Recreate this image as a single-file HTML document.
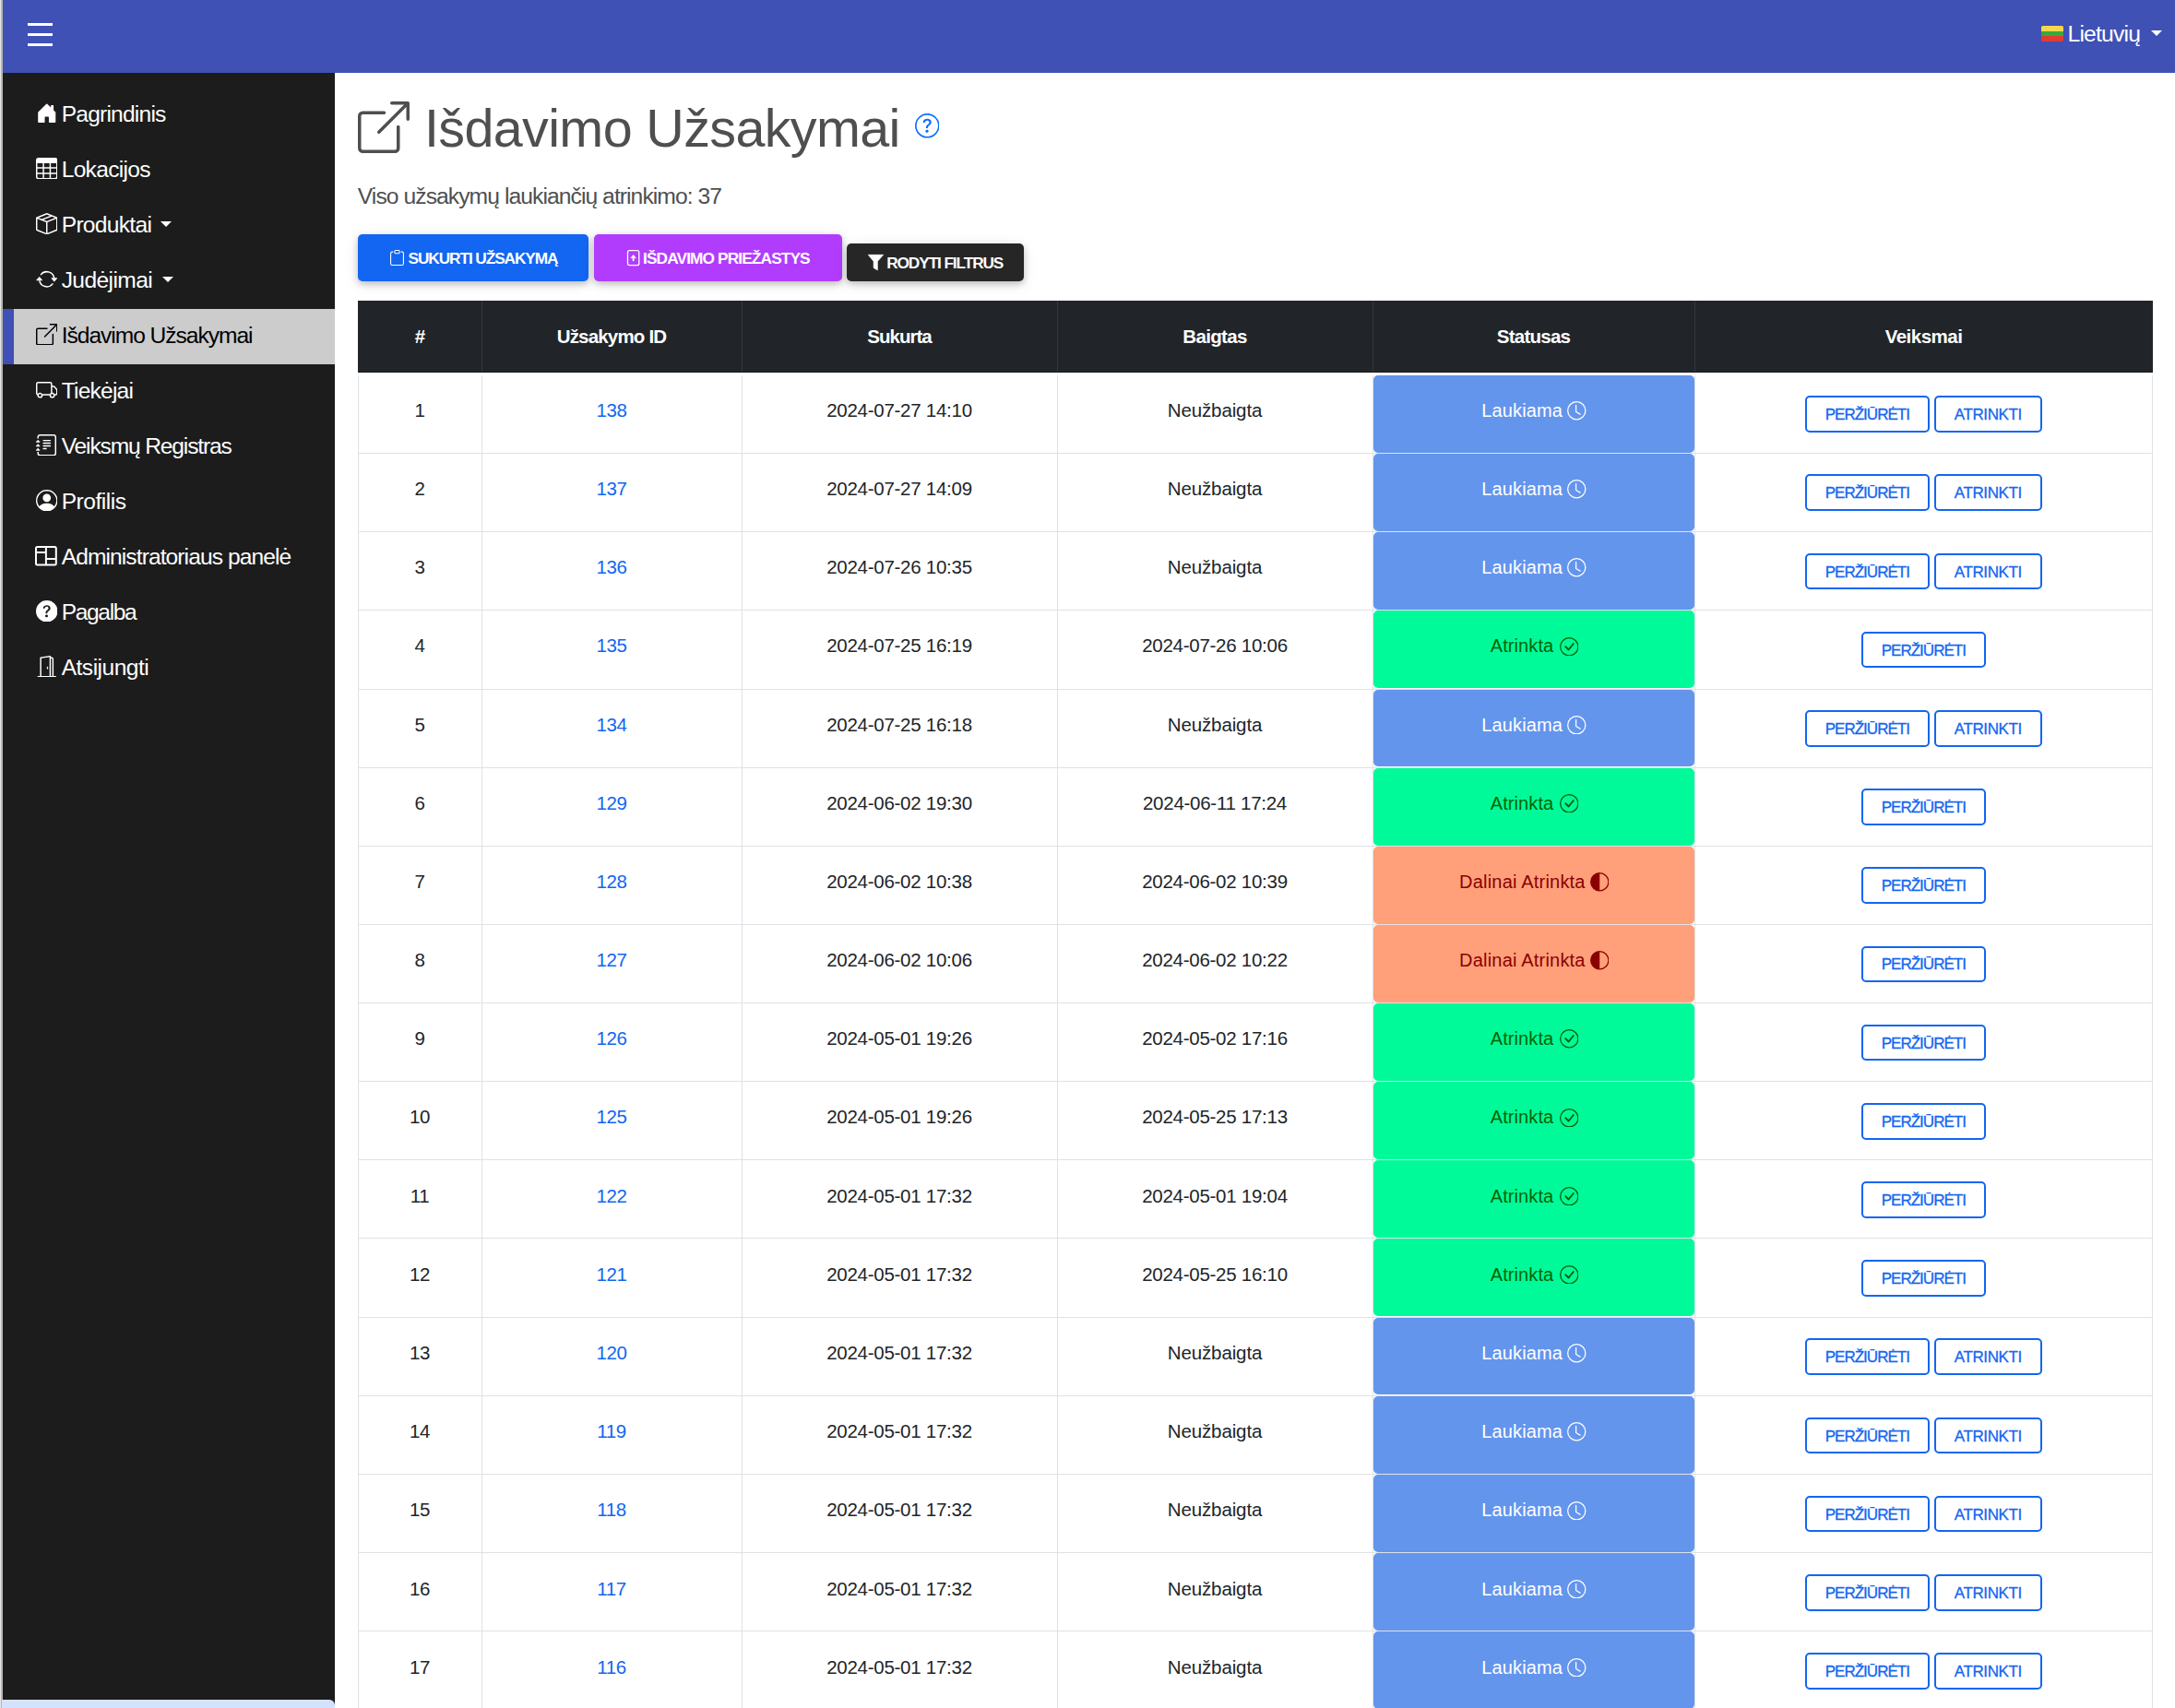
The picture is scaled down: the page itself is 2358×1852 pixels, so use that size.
<!DOCTYPE html>
<html><head><meta charset="utf-8"><title>Išdavimo Užsakymai</title>
<style>
html,body{margin:0;padding:0;width:2358px;height:1852px;overflow:hidden;background:#fff;}
body{font-family:"Liberation Sans",sans-serif;position:relative;}
.a{position:absolute;white-space:nowrap;}
.t{position:absolute;white-space:nowrap;line-height:1;}
</style></head><body>

<div class="a" style="left:0;top:0;width:1.3px;height:1852px;background:#e6e6e6"></div>
<div class="a" style="left:1.3px;top:0;width:1.7px;height:1852px;background:#b7b7b0"></div>
<div class="a" style="left:3px;top:0;width:2355px;height:79px;background:#3f51b5"></div>
<div class="a" style="left:30px;top:24.5px;width:26.5px;height:3.5px;background:#fff"></div>
<div class="a" style="left:30px;top:35.5px;width:26.5px;height:3.5px;background:#fff"></div>
<div class="a" style="left:30px;top:46.5px;width:26.5px;height:3.5px;background:#fff"></div>
<div class="a" style="left:2213px;top:28px;width:24px;height:17px;overflow:hidden;border-radius:1.5px;box-shadow:inset 0 0 0 1px rgba(0,0,0,.12)"><div style="height:6px;background:#f6d64e"></div><div style="height:5px;background:#3aa83a"></div><div style="height:6px;background:#e23a36"></div></div>
<div class="t" style="left:2241.5px;top:25.09px;font-size:24.7px;color:#fff;letter-spacing:-0.81px">Lietuvių</div>
<div class="a" style="left:2332px;top:33px;width:0;height:0;border-left:6px solid transparent;border-right:6px solid transparent;border-top:6.5px solid #fff"></div>
<div class="a" style="left:3px;top:79px;width:360px;height:1773px;background:#1c1c1c"></div>
<div class="a" style="left:3px;top:335px;width:360px;height:60px;background:#cccccc"></div>
<div class="a" style="left:3px;top:335px;width:12px;height:60px;background:#3f51b5"></div>
<div class="a" style="left:2px;top:1842.5px;width:361px;height:20px;background:#d3e3fd;border-top-right-radius:6px"></div>
<svg style="position:absolute;left:38.8px;top:110.80000000000001px" width="23.5" height="23.5" viewBox="0 0 16 16" fill="#fff"><path d="M6.5 14.5v-3.505c0-.245.25-.495.5-.495h2c.25 0 .5.25.5.5v3.5a.5.5 0 0 0 .5.5h4a.5.5 0 0 0 .5-.5v-7a.5.5 0 0 0-.146-.354L13 5.793V2.5a.5.5 0 0 0-.5-.5h-1a.5.5 0 0 0-.5.5v1.293L8.354 1.146a.5.5 0 0 0-.708 0l-6 6A.5.5 0 0 0 1.5 7.5v7a.5.5 0 0 0 .5.5h4a.5.5 0 0 0 .5-.5"/></svg>
<div class="t" style="left:66.7px;top:111.97px;font-size:24.6px;color:#fff;letter-spacing:-0.8px">Pagrindinis</div>
<svg style="position:absolute;left:38.8px;top:170.8px" width="23.5" height="23.5" viewBox="0 0 16 16" fill="#fff"><path d="M0 2a2 2 0 0 1 2-2h12a2 2 0 0 1 2 2v12a2 2 0 0 1-2 2H2a2 2 0 0 1-2-2zm15 2h-4v3h4zm0 4h-4v3h4zm0 4h-4v3h3a1 1 0 0 0 1-1zm-5 3v-3H6v3zm-5 0v-3H1v2a1 1 0 0 0 1 1zm-4-4h4V8H1zm0-4h4V4H1zm5-3v3h4V4zm4 4H6v3h4z"/></svg>
<div class="t" style="left:66.7px;top:171.97px;font-size:24.6px;color:#fff;letter-spacing:-0.71px">Lokacijos</div>
<svg style="position:absolute;left:38.8px;top:230.8px" width="23.5" height="23.5" viewBox="0 0 16 16" fill="#fff"><path d="M8.186 1.113a.5.5 0 0 0-.372 0L1.846 3.5l2.404.961L10.404 2zm3.564 1.426L5.596 5 8 5.961 14.154 3.5zm3.25 1.7-6.5 2.6v7.922l6.5-2.6V4.24zM7.5 14.762V6.838L1 4.239v7.923zM7.443.184a1.5 1.5 0 0 1 1.114 0l7.129 2.852A.5.5 0 0 1 16 3.5v8.662a1 1 0 0 1-.629.928l-7.185 2.874a.5.5 0 0 1-.372 0L.63 13.09a1 1 0 0 1-.63-.928V3.5a.5.5 0 0 1 .314-.464z"/></svg>
<div class="t" style="left:66.7px;top:231.97px;font-size:24.6px;color:#fff;letter-spacing:-0.71px">Produktai</div>
<div class="a" style="left:174px;top:240.3px;width:0;height:0;border-left:6px solid transparent;border-right:6px solid transparent;border-top:6.5px solid #fff"></div>
<svg style="position:absolute;left:38.8px;top:290.8px" width="23.5" height="23.5" viewBox="0 0 16 16" fill="#fff"><path d="M11.534 7h3.932a.25.25 0 0 1 .192.41l-1.966 2.36a.25.25 0 0 1-.384 0l-1.966-2.36a.25.25 0 0 1 .192-.41m-11 2h3.932a.25.25 0 0 0 .192-.41L2.692 6.23a.25.25 0 0 0-.384 0L.342 8.59A.25.25 0 0 0 .534 9"/><path fill-rule="evenodd" d="M8 3c-1.552 0-2.94.707-3.857 1.818a.5.5 0 1 1-.771-.636A6.002 6.002 0 0 1 13.917 7H12.9A5 5 0 0 0 8 3M3.1 9a5.002 5.002 0 0 0 8.757 2.182.5.5 0 1 1 .771.636A6.002 6.002 0 0 1 2.083 9z"/></svg>
<div class="t" style="left:66.7px;top:291.97px;font-size:24.6px;color:#fff;letter-spacing:-0.61px">Judėjimai</div>
<div class="a" style="left:176px;top:300.3px;width:0;height:0;border-left:6px solid transparent;border-right:6px solid transparent;border-top:6.5px solid #fff"></div>
<svg style="position:absolute;left:38.8px;top:350.8px" width="23.5" height="23.5" viewBox="0 0 16 16" fill="#000"><path fill-rule="evenodd" d="M8.636 3.5a.5.5 0 0 0-.5-.5H1.5A1.5 1.5 0 0 0 0 4.5v10A1.5 1.5 0 0 0 1.5 16h10a1.5 1.5 0 0 0 1.5-1.5V7.864a.5.5 0 0 0-1 0V14.5a.5.5 0 0 1-.5.5h-10a.5.5 0 0 1-.5-.5v-10a.5.5 0 0 1 .5-.5h6.636a.5.5 0 0 0 .5-.5"/><path fill-rule="evenodd" d="M16 .5a.5.5 0 0 0-.5-.5h-5a.5.5 0 0 0 0 1h3.793L6.146 9.146a.5.5 0 1 0 .708.708L15 1.707V5.5a.5.5 0 0 0 1 0z"/></svg>
<div class="t" style="left:66.7px;top:351.97px;font-size:24.6px;color:#000;letter-spacing:-1.04px">Išdavimo Užsakymai</div>
<svg style="position:absolute;left:38.8px;top:410.8px" width="23.5" height="23.5" viewBox="0 0 16 16" fill="#fff"><path d="M0 3.5A1.5 1.5 0 0 1 1.5 2h9A1.5 1.5 0 0 1 12 3.5V5h1.02a1.5 1.5 0 0 1 1.17.563l1.481 1.85a1.5 1.5 0 0 1 .329.938V10.5a1.5 1.5 0 0 1-1.5 1.5H14a2 2 0 1 1-4 0H5a2 2 0 1 1-3.998-.085A1.5 1.5 0 0 1 0 10.5zm1.294 7.456A2 2 0 0 1 4.732 11h5.536a2 2 0 0 1 .732-.732V3.5a.5.5 0 0 0-.5-.5h-9a.5.5 0 0 0-.5.5v7a.5.5 0 0 0 .294.456M12 10a2 2 0 0 1 1.732 1h.768a.5.5 0 0 0 .5-.5V8.35a.5.5 0 0 0-.11-.312l-1.48-1.85A.5.5 0 0 0 13.02 6H12zm-9 1a1 1 0 1 0 0 2 1 1 0 0 0 0-2m9 0a1 1 0 1 0 0 2 1 1 0 0 0 0-2"/></svg>
<div class="t" style="left:66.7px;top:411.97px;font-size:24.6px;color:#fff;letter-spacing:-0.8px">Tiekėjai</div>
<svg style="position:absolute;left:38.8px;top:470.8px" width="23.5" height="23.5" viewBox="0 0 16 16" fill="#fff"><path fill-rule="evenodd" d="M5 10.5a.5.5 0 0 1 .5-.5h2a.5.5 0 0 1 0 1h-2a.5.5 0 0 1-.5-.5m0-2a.5.5 0 0 1 .5-.5h5a.5.5 0 0 1 0 1h-5a.5.5 0 0 1-.5-.5m0-2a.5.5 0 0 1 .5-.5h5a.5.5 0 0 1 0 1h-5a.5.5 0 0 1-.5-.5m0-2a.5.5 0 0 1 .5-.5h5a.5.5 0 0 1 0 1h-5a.5.5 0 0 1-.5-.5"/><path d="M3 0h10a2 2 0 0 1 2 2v12a2 2 0 0 1-2 2H3a2 2 0 0 1-2-2v-1h1v1a1 1 0 0 0 1 1h10a1 1 0 0 0 1-1V2a1 1 0 0 0-1-1H3a1 1 0 0 0-1 1v1H1V2a2 2 0 0 1 2-2"/><path d="M1 5v-.5a.5.5 0 0 1 1 0V5h.5a.5.5 0 0 1 0 1h-2a.5.5 0 0 1 0-1zm0 3v-.5a.5.5 0 0 1 1 0V8h.5a.5.5 0 0 1 0 1h-2a.5.5 0 0 1 0-1zm0 3v-.5a.5.5 0 0 1 1 0v.5h.5a.5.5 0 0 1 0 1h-2a.5.5 0 0 1 0-1z"/></svg>
<div class="t" style="left:66.7px;top:471.97px;font-size:24.6px;color:#fff;letter-spacing:-1.16px">Veiksmų Registras</div>
<svg style="position:absolute;left:38.8px;top:530.8px" width="23.5" height="23.5" viewBox="0 0 16 16" fill="#fff"><path d="M11 6a3 3 0 1 1-6 0 3 3 0 0 1 6 0"/><path fill-rule="evenodd" d="M0 8a8 8 0 1 1 16 0A8 8 0 0 1 0 8m8-7a7 7 0 0 0-5.468 11.37C3.242 11.226 4.805 10 8 10s4.757 1.225 5.468 2.37A7 7 0 0 0 8 1"/></svg>
<div class="t" style="left:66.7px;top:531.97px;font-size:24.6px;color:#fff;letter-spacing:-0.49px">Profilis</div>
<svg style="position:absolute;left:38px;top:591.5px" width="24" height="22" viewBox="0 0 24 22"><rect x="1" y="1" width="21.8" height="19.6" rx="1.5" fill="none" stroke="#fff" stroke-width="2"/><line x1="11.9" y1="1" x2="11.9" y2="20.6" stroke="#fff" stroke-width="2"/><line x1="1" y1="7" x2="11.9" y2="7" stroke="#fff" stroke-width="2"/><line x1="11.9" y1="14" x2="22.8" y2="14" stroke="#fff" stroke-width="2"/></svg>
<div class="t" style="left:66.7px;top:591.97px;font-size:24.6px;color:#fff;letter-spacing:-0.92px">Administratoriaus panelė</div>
<svg style="position:absolute;left:38.8px;top:650.8px" width="23.5" height="23.5" viewBox="0 0 16 16" fill="#fff"><path d="M16 8A8 8 0 1 1 0 8a8 8 0 0 1 16 0M5.496 6.033h.825c.138 0 .248-.113.266-.25.09-.656.54-1.134 1.342-1.134.686 0 1.314.343 1.314 1.168 0 .635-.374.927-.965 1.371-.673.489-1.206 1.06-1.168 1.987l.003.217a.25.25 0 0 0 .25.246h.811a.25.25 0 0 0 .25-.25v-.105c0-.718.273-.927 1.01-1.486.609-.463 1.244-.977 1.244-2.056 0-1.511-1.276-2.241-2.673-2.241-1.267 0-2.655.59-2.75 2.286a.237.237 0 0 0 .241.247m2.325 6.443c.61 0 1.029-.394 1.029-.927 0-.552-.42-.94-1.029-.94-.584 0-1.009.388-1.009.94 0 .533.425.927 1.01.927z"/></svg>
<div class="t" style="left:66.7px;top:651.97px;font-size:24.6px;color:#fff;letter-spacing:-1.37px">Pagalba</div>
<svg style="position:absolute;left:38.8px;top:710.8px" width="23.5" height="23.5" viewBox="0 0 16 16" fill="#fff"><path d="M8.5 10c-.276 0-.5-.448-.5-1s.224-1 .5-1 .5.448.5 1-.224 1-.5 1"/><path d="M10.828.122A.5.5 0 0 1 11 .5V1h.5A1.5 1.5 0 0 1 13 2.5V15h1.5a.5.5 0 0 1 0 1h-13a.5.5 0 0 1 0-1H3V1.5a.5.5 0 0 1 .43-.495l7-1a.5.5 0 0 1 .398.117M11.5 2H11v13h1V2.5a.5.5 0 0 0-.5-.5M4 1.934V15h6V1.077z"/></svg>
<div class="t" style="left:66.7px;top:711.97px;font-size:24.6px;color:#fff;letter-spacing:-0.53px">Atsijungti</div>
<svg style="position:absolute;left:388px;top:110px" width="56" height="56" viewBox="0 0 16 16" fill="#4f4f4f"><path fill-rule="evenodd" d="M8.636 3.5a.5.5 0 0 0-.5-.5H1.5A1.5 1.5 0 0 0 0 4.5v10A1.5 1.5 0 0 0 1.5 16h10a1.5 1.5 0 0 0 1.5-1.5V7.864a.5.5 0 0 0-1 0V14.5a.5.5 0 0 1-.5.5h-10a.5.5 0 0 1-.5-.5v-10a.5.5 0 0 1 .5-.5h6.636a.5.5 0 0 0 .5-.5"/><path fill-rule="evenodd" d="M16 .5a.5.5 0 0 0-.5-.5h-5a.5.5 0 0 0 0 1h3.793L6.146 9.146a.5.5 0 1 0 .708.708L15 1.707V5.5a.5.5 0 0 0 1 0z"/></svg>
<div class="t" style="left:460px;top:110.51px;font-size:57.5px;color:#4f4f4f;letter-spacing:-0.64px">Išdavimo Užsakymai</div>
<svg style="position:absolute;left:991.5px;top:123.2px" width="26.6" height="26.6" viewBox="0 0 16 16" fill="#0d6efd"><path d="M8 15A7 7 0 1 1 8 1a7 7 0 0 1 0 14m0 1A8 8 0 1 0 8 0a8 8 0 0 0 0 16"/><path d="M5.255 5.786a.237.237 0 0 0 .241.247h.825c.138 0 .248-.113.266-.25.09-.656.54-1.134 1.342-1.134.686 0 1.314.343 1.314 1.168 0 .635-.374.927-.965 1.371-.673.489-1.206 1.06-1.168 1.987l.003.217a.25.25 0 0 0 .25.246h.811a.25.25 0 0 0 .25-.25v-.105c0-.718.273-.927 1.01-1.486.609-.463 1.244-.977 1.244-2.056 0-1.511-1.276-2.241-2.673-2.241-1.267 0-2.655.59-2.75 2.286m1.557 5.763c0 .533.425.927 1.01.927.609 0 1.028-.394 1.028-.927 0-.552-.42-.94-1.029-.94-.584 0-1.009.388-1.009.94"/></svg>
<div class="t" style="left:387.8px;top:200.69px;font-size:24.7px;color:#4f4f4f;letter-spacing:-0.95px">Viso užsakymų laukiančių atrinkimo: 37</div>
<div class="a" style="left:388px;top:254px;width:250px;height:51px;background:#1266f1;border-radius:5px;box-shadow:0 3px 7px 0 rgba(0,0,0,.2),0 3px 15px 0 rgba(0,0,0,.1)"></div>
<div class="a" style="left:644px;top:254px;width:269px;height:51px;background:#b23cfd;border-radius:5px;box-shadow:0 3px 7px 0 rgba(0,0,0,.2),0 3px 15px 0 rgba(0,0,0,.1)"></div>
<div class="a" style="left:918px;top:264px;width:192px;height:41px;background:#262626;border-radius:5px;box-shadow:0 3px 7px 0 rgba(0,0,0,.2),0 3px 15px 0 rgba(0,0,0,.1)"></div>
<svg style="position:absolute;left:421.9px;top:270.9px" width="17" height="17" viewBox="0 0 16 16" fill="#fff"><path d="M4 1.5H3a2 2 0 0 0-2 2V14a2 2 0 0 0 2 2h10a2 2 0 0 0 2-2V3.5a2 2 0 0 0-2-2h-1v1h1a1 1 0 0 1 1 1V14a1 1 0 0 1-1 1H3a1 1 0 0 1-1-1V3.5a1 1 0 0 1 1-1h1z"/><path d="M9.5 1a.5.5 0 0 1 .5.5v1a.5.5 0 0 1-.5.5h-3a.5.5 0 0 1-.5-.5v-1a.5.5 0 0 1 .5-.5zm-3-1A1.5 1.5 0 0 0 5 1.5v1A1.5 1.5 0 0 0 6.5 4h3A1.5 1.5 0 0 0 11 2.5v-1A1.5 1.5 0 0 0 9.5 0z"/></svg>
<svg style="position:absolute;left:677.5px;top:270.8px" width="17" height="18" viewBox="0 0 17 18"><rect x="2.5" y="0.65" width="12.3" height="16" rx="2" fill="none" stroke="#fff" stroke-width="1.3"/><polygon points="5.7,8.8 11.5,8.8 8.6,5.2" fill="#fff" stroke="#fff" stroke-width="0.4" stroke-linejoin="round"/><rect x="7.75" y="8.3" width="1.75" height="3.8" fill="#fff"/></svg>
<svg style="position:absolute;left:936px;top:270px" width="30" height="30" viewBox="0 0 30 30"><polygon points="5.2,6.3 21.7,6.3 15.4,13.4 15.4,22.9 11.1,20.5 11.1,13.4" fill="#fff" stroke="#fff" stroke-width="0.6" stroke-linejoin="round"/></svg>
<div class="t" style="left:442.5px;top:272.35px;font-size:17.3px;font-weight:bold;color:#fff;letter-spacing:-1.1px">SUKURTI UŽSAKYMĄ</div>
<div class="t" style="left:697px;top:272.35px;font-size:17.3px;font-weight:bold;color:#fff;letter-spacing:-0.88px">IŠDAVIMO PRIEŽASTYS</div>
<div class="t" style="left:961.2px;top:276.95px;font-size:17.3px;font-weight:bold;color:#fff;letter-spacing:-1.12px">RODYTI FILTRUS</div>
<div class="a" style="left:388px;top:326px;width:1946px;height:78px;background:#212529"></div>
<div class="a" style="left:388px;top:403px;width:1946px;height:1px;background:#16181b"></div>
<div class="a" style="left:522px;top:326px;width:1px;height:77px;background:#32383e"></div>
<div class="a" style="left:804px;top:326px;width:1px;height:77px;background:#32383e"></div>
<div class="a" style="left:1146px;top:326px;width:1px;height:77px;background:#32383e"></div>
<div class="a" style="left:1488px;top:326px;width:1px;height:77px;background:#32383e"></div>
<div class="a" style="left:1837px;top:326px;width:1px;height:77px;background:#32383e"></div>
<div class="t" style="left:388px;width:134px;text-align:center;top:354.64px;font-size:20.5px;font-weight:bold;color:#fff;letter-spacing:-0.8px">#</div>
<div class="t" style="left:522px;width:282px;text-align:center;top:354.64px;font-size:20.5px;font-weight:bold;color:#fff;letter-spacing:-0.81px">Užsakymo ID</div>
<div class="t" style="left:804px;width:342px;text-align:center;top:354.64px;font-size:20.5px;font-weight:bold;color:#fff;letter-spacing:-1.0px">Sukurta</div>
<div class="t" style="left:1146px;width:342px;text-align:center;top:354.64px;font-size:20.5px;font-weight:bold;color:#fff;letter-spacing:-0.68px">Baigtas</div>
<div class="t" style="left:1488px;width:349px;text-align:center;top:354.64px;font-size:20.5px;font-weight:bold;color:#fff;letter-spacing:-0.74px">Statusas</div>
<div class="t" style="left:1837px;width:497px;text-align:center;top:354.64px;font-size:20.5px;font-weight:bold;color:#fff;letter-spacing:-0.51px">Veiksmai</div>
<div class="a" style="left:388px;top:407px;width:1px;height:1445px;background:#dee2e6"></div>
<div class="a" style="left:522px;top:407px;width:1px;height:1445px;background:#dee2e6"></div>
<div class="a" style="left:804px;top:407px;width:1px;height:1445px;background:#dee2e6"></div>
<div class="a" style="left:1146px;top:407px;width:1px;height:1445px;background:#dee2e6"></div>
<div class="a" style="left:1488px;top:407px;width:1px;height:1445px;background:#dee2e6"></div>
<div class="a" style="left:1837px;top:407px;width:1px;height:1445px;background:#dee2e6"></div>
<div class="a" style="left:2333px;top:407px;width:1px;height:1445px;background:#dee2e6"></div>
<div class="a" style="left:1489px;top:407.00px;width:348px;height:83.93px;background:#6495ed;border-radius:5px"></div>
<div class="a" style="left:388px;top:491.13px;width:1946px;height:1px;background:#dee2e6"></div>
<div class="t" style="left:388px;width:134px;text-align:center;top:434.84px;font-size:20.5px;color:#212529;letter-spacing:-0.35px">1</div>
<div class="t" style="left:522px;width:282px;text-align:center;top:434.84px;font-size:20.5px;color:#1266f1;letter-spacing:-0.35px">138</div>
<div class="t" style="left:804px;width:342px;text-align:center;top:434.84px;font-size:20.5px;color:#212529;letter-spacing:-0.27px">2024-07-27 14:10</div>
<div class="t" style="left:1146px;width:342px;text-align:center;top:434.84px;font-size:20.5px;color:#212529;letter-spacing:-0.12px">Neužbaigta</div>
<div class="t" style="left:1606.30px;top:434.87px;font-size:20px;color:#fff;letter-spacing:0.13px">Laukiama</div>
<svg style="position:absolute;left:1699.2px;top:435.0px" width="20.5" height="20.5" viewBox="0 0 16 16" fill="#fff"><path d="M8 3.5a.5.5 0 0 0-1 0V9a.5.5 0 0 0 .252.434l3.5 2a.5.5 0 0 0 .496-.868L8 8.71z"/><path d="M16 8A8 8 0 1 1 0 8a8 8 0 0 1 16 0M1 8a7 7 0 1 0 14 0A7 7 0 0 0 1 8"/></svg>
<div class="a" style="left:1957px;top:429.30px;width:134.7px;height:39.6px;box-sizing:border-box;border:2px solid #1266f1;border-radius:5px"></div>
<div class="a" style="left:2097px;top:429.30px;width:116.7px;height:39.6px;box-sizing:border-box;border:2px solid #1266f1;border-radius:5px"></div>
<div class="t" style="left:1957px;width:134.7px;text-align:center;top:441.21px;font-size:17px;color:#1266f1;-webkit-text-stroke:0.3px #1266f1;letter-spacing:-0.97px">PERŽIŪRĖTI</div>
<div class="t" style="left:2097px;width:116.7px;text-align:center;top:441.21px;font-size:17px;color:#1266f1;-webkit-text-stroke:0.3px #1266f1;letter-spacing:-0.39px">ATRINKTI</div>
<div class="a" style="left:1489px;top:492.13px;width:348px;height:83.93px;background:#6495ed;border-radius:5px"></div>
<div class="a" style="left:388px;top:576.26px;width:1946px;height:1px;background:#dee2e6"></div>
<div class="t" style="left:388px;width:134px;text-align:center;top:520.02px;font-size:20.5px;color:#212529;letter-spacing:-0.35px">2</div>
<div class="t" style="left:522px;width:282px;text-align:center;top:520.02px;font-size:20.5px;color:#1266f1;letter-spacing:-0.35px">137</div>
<div class="t" style="left:804px;width:342px;text-align:center;top:520.02px;font-size:20.5px;color:#212529;letter-spacing:-0.27px">2024-07-27 14:09</div>
<div class="t" style="left:1146px;width:342px;text-align:center;top:520.02px;font-size:20.5px;color:#212529;letter-spacing:-0.12px">Neužbaigta</div>
<div class="t" style="left:1606.30px;top:520.05px;font-size:20px;color:#fff;letter-spacing:0.13px">Laukiama</div>
<svg style="position:absolute;left:1699.2px;top:520.18px" width="20.5" height="20.5" viewBox="0 0 16 16" fill="#fff"><path d="M8 3.5a.5.5 0 0 0-1 0V9a.5.5 0 0 0 .252.434l3.5 2a.5.5 0 0 0 .496-.868L8 8.71z"/><path d="M16 8A8 8 0 1 1 0 8a8 8 0 0 1 16 0M1 8a7 7 0 1 0 14 0A7 7 0 0 0 1 8"/></svg>
<div class="a" style="left:1957px;top:514.48px;width:134.7px;height:39.6px;box-sizing:border-box;border:2px solid #1266f1;border-radius:5px"></div>
<div class="a" style="left:2097px;top:514.48px;width:116.7px;height:39.6px;box-sizing:border-box;border:2px solid #1266f1;border-radius:5px"></div>
<div class="t" style="left:1957px;width:134.7px;text-align:center;top:526.39px;font-size:17px;color:#1266f1;-webkit-text-stroke:0.3px #1266f1;letter-spacing:-0.97px">PERŽIŪRĖTI</div>
<div class="t" style="left:2097px;width:116.7px;text-align:center;top:526.39px;font-size:17px;color:#1266f1;-webkit-text-stroke:0.3px #1266f1;letter-spacing:-0.39px">ATRINKTI</div>
<div class="a" style="left:1489px;top:577.26px;width:348px;height:83.93px;background:#6495ed;border-radius:5px"></div>
<div class="a" style="left:388px;top:661.39px;width:1946px;height:1px;background:#dee2e6"></div>
<div class="t" style="left:388px;width:134px;text-align:center;top:605.20px;font-size:20.5px;color:#212529;letter-spacing:-0.35px">3</div>
<div class="t" style="left:522px;width:282px;text-align:center;top:605.20px;font-size:20.5px;color:#1266f1;letter-spacing:-0.35px">136</div>
<div class="t" style="left:804px;width:342px;text-align:center;top:605.20px;font-size:20.5px;color:#212529;letter-spacing:-0.27px">2024-07-26 10:35</div>
<div class="t" style="left:1146px;width:342px;text-align:center;top:605.20px;font-size:20.5px;color:#212529;letter-spacing:-0.12px">Neužbaigta</div>
<div class="t" style="left:1606.30px;top:605.23px;font-size:20px;color:#fff;letter-spacing:0.13px">Laukiama</div>
<svg style="position:absolute;left:1699.2px;top:605.36px" width="20.5" height="20.5" viewBox="0 0 16 16" fill="#fff"><path d="M8 3.5a.5.5 0 0 0-1 0V9a.5.5 0 0 0 .252.434l3.5 2a.5.5 0 0 0 .496-.868L8 8.71z"/><path d="M16 8A8 8 0 1 1 0 8a8 8 0 0 1 16 0M1 8a7 7 0 1 0 14 0A7 7 0 0 0 1 8"/></svg>
<div class="a" style="left:1957px;top:599.66px;width:134.7px;height:39.6px;box-sizing:border-box;border:2px solid #1266f1;border-radius:5px"></div>
<div class="a" style="left:2097px;top:599.66px;width:116.7px;height:39.6px;box-sizing:border-box;border:2px solid #1266f1;border-radius:5px"></div>
<div class="t" style="left:1957px;width:134.7px;text-align:center;top:611.57px;font-size:17px;color:#1266f1;-webkit-text-stroke:0.3px #1266f1;letter-spacing:-0.97px">PERŽIŪRĖTI</div>
<div class="t" style="left:2097px;width:116.7px;text-align:center;top:611.57px;font-size:17px;color:#1266f1;-webkit-text-stroke:0.3px #1266f1;letter-spacing:-0.39px">ATRINKTI</div>
<div class="a" style="left:1489px;top:662.39px;width:348px;height:83.93px;background:#00fa9a;border-radius:5px"></div>
<div class="a" style="left:388px;top:746.52px;width:1946px;height:1px;background:#dee2e6"></div>
<div class="t" style="left:388px;width:134px;text-align:center;top:690.38px;font-size:20.5px;color:#212529;letter-spacing:-0.35px">4</div>
<div class="t" style="left:522px;width:282px;text-align:center;top:690.38px;font-size:20.5px;color:#1266f1;letter-spacing:-0.35px">135</div>
<div class="t" style="left:804px;width:342px;text-align:center;top:690.38px;font-size:20.5px;color:#212529;letter-spacing:-0.27px">2024-07-25 16:19</div>
<div class="t" style="left:1146px;width:342px;text-align:center;top:690.38px;font-size:20.5px;color:#212529;letter-spacing:-0.27px">2024-07-26 10:06</div>
<div class="t" style="left:1615.70px;top:690.41px;font-size:20px;color:#006400;letter-spacing:0.1px">Atrinkta</div>
<svg style="position:absolute;left:1690.8px;top:690.54px" width="20.5" height="20.5" viewBox="0 0 16 16" fill="#006400"><path d="M8 15A7 7 0 1 1 8 1a7 7 0 0 1 0 14m0 1A8 8 0 1 0 8 0a8 8 0 0 0 0 16"/><path d="M10.97 4.97a.235.235 0 0 0-.02.022L7.477 9.417 5.384 7.323a.75.75 0 0 0-1.06 1.06L6.97 11.03a.75.75 0 0 0 1.079-.02l3.992-4.99a.75.75 0 0 0-1.071-1.05"/></svg>
<div class="a" style="left:2018px;top:684.84px;width:134.7px;height:39.6px;box-sizing:border-box;border:2px solid #1266f1;border-radius:5px"></div>
<div class="t" style="left:2018px;width:134.7px;text-align:center;top:696.75px;font-size:17px;color:#1266f1;-webkit-text-stroke:0.3px #1266f1;letter-spacing:-0.97px">PERŽIŪRĖTI</div>
<div class="a" style="left:1489px;top:747.52px;width:348px;height:83.93px;background:#6495ed;border-radius:5px"></div>
<div class="a" style="left:388px;top:831.65px;width:1946px;height:1px;background:#dee2e6"></div>
<div class="t" style="left:388px;width:134px;text-align:center;top:775.56px;font-size:20.5px;color:#212529;letter-spacing:-0.35px">5</div>
<div class="t" style="left:522px;width:282px;text-align:center;top:775.56px;font-size:20.5px;color:#1266f1;letter-spacing:-0.35px">134</div>
<div class="t" style="left:804px;width:342px;text-align:center;top:775.56px;font-size:20.5px;color:#212529;letter-spacing:-0.27px">2024-07-25 16:18</div>
<div class="t" style="left:1146px;width:342px;text-align:center;top:775.56px;font-size:20.5px;color:#212529;letter-spacing:-0.12px">Neužbaigta</div>
<div class="t" style="left:1606.30px;top:775.59px;font-size:20px;color:#fff;letter-spacing:0.13px">Laukiama</div>
<svg style="position:absolute;left:1699.2px;top:775.72px" width="20.5" height="20.5" viewBox="0 0 16 16" fill="#fff"><path d="M8 3.5a.5.5 0 0 0-1 0V9a.5.5 0 0 0 .252.434l3.5 2a.5.5 0 0 0 .496-.868L8 8.71z"/><path d="M16 8A8 8 0 1 1 0 8a8 8 0 0 1 16 0M1 8a7 7 0 1 0 14 0A7 7 0 0 0 1 8"/></svg>
<div class="a" style="left:1957px;top:770.02px;width:134.7px;height:39.6px;box-sizing:border-box;border:2px solid #1266f1;border-radius:5px"></div>
<div class="a" style="left:2097px;top:770.02px;width:116.7px;height:39.6px;box-sizing:border-box;border:2px solid #1266f1;border-radius:5px"></div>
<div class="t" style="left:1957px;width:134.7px;text-align:center;top:781.93px;font-size:17px;color:#1266f1;-webkit-text-stroke:0.3px #1266f1;letter-spacing:-0.97px">PERŽIŪRĖTI</div>
<div class="t" style="left:2097px;width:116.7px;text-align:center;top:781.93px;font-size:17px;color:#1266f1;-webkit-text-stroke:0.3px #1266f1;letter-spacing:-0.39px">ATRINKTI</div>
<div class="a" style="left:1489px;top:832.65px;width:348px;height:83.93px;background:#00fa9a;border-radius:5px"></div>
<div class="a" style="left:388px;top:916.78px;width:1946px;height:1px;background:#dee2e6"></div>
<div class="t" style="left:388px;width:134px;text-align:center;top:860.74px;font-size:20.5px;color:#212529;letter-spacing:-0.35px">6</div>
<div class="t" style="left:522px;width:282px;text-align:center;top:860.74px;font-size:20.5px;color:#1266f1;letter-spacing:-0.35px">129</div>
<div class="t" style="left:804px;width:342px;text-align:center;top:860.74px;font-size:20.5px;color:#212529;letter-spacing:-0.27px">2024-06-02 19:30</div>
<div class="t" style="left:1146px;width:342px;text-align:center;top:860.74px;font-size:20.5px;color:#212529;letter-spacing:-0.27px">2024-06-11 17:24</div>
<div class="t" style="left:1615.70px;top:860.77px;font-size:20px;color:#006400;letter-spacing:0.1px">Atrinkta</div>
<svg style="position:absolute;left:1690.8px;top:860.9px" width="20.5" height="20.5" viewBox="0 0 16 16" fill="#006400"><path d="M8 15A7 7 0 1 1 8 1a7 7 0 0 1 0 14m0 1A8 8 0 1 0 8 0a8 8 0 0 0 0 16"/><path d="M10.97 4.97a.235.235 0 0 0-.02.022L7.477 9.417 5.384 7.323a.75.75 0 0 0-1.06 1.06L6.97 11.03a.75.75 0 0 0 1.079-.02l3.992-4.99a.75.75 0 0 0-1.071-1.05"/></svg>
<div class="a" style="left:2018px;top:855.20px;width:134.7px;height:39.6px;box-sizing:border-box;border:2px solid #1266f1;border-radius:5px"></div>
<div class="t" style="left:2018px;width:134.7px;text-align:center;top:867.11px;font-size:17px;color:#1266f1;-webkit-text-stroke:0.3px #1266f1;letter-spacing:-0.97px">PERŽIŪRĖTI</div>
<div class="a" style="left:1489px;top:917.78px;width:348px;height:83.93px;background:#ffa07a;border-radius:5px"></div>
<div class="a" style="left:388px;top:1001.91px;width:1946px;height:1px;background:#dee2e6"></div>
<div class="t" style="left:388px;width:134px;text-align:center;top:945.92px;font-size:20.5px;color:#212529;letter-spacing:-0.35px">7</div>
<div class="t" style="left:522px;width:282px;text-align:center;top:945.92px;font-size:20.5px;color:#1266f1;letter-spacing:-0.35px">128</div>
<div class="t" style="left:804px;width:342px;text-align:center;top:945.92px;font-size:20.5px;color:#212529;letter-spacing:-0.27px">2024-06-02 10:38</div>
<div class="t" style="left:1146px;width:342px;text-align:center;top:945.92px;font-size:20.5px;color:#212529;letter-spacing:-0.27px">2024-06-02 10:39</div>
<div class="t" style="left:1582.10px;top:945.95px;font-size:20px;color:#8b0000;letter-spacing:0.2px">Dalinai Atrinkta</div>
<svg style="position:absolute;left:1723.6px;top:946.0799999999999px" width="20.5" height="20.5" viewBox="0 0 16 16" fill="#8b0000"><path d="M8 15A7 7 0 1 0 8 1zm0 1A8 8 0 1 1 8 0a8 8 0 0 1 0 16"/></svg>
<div class="a" style="left:2018px;top:940.38px;width:134.7px;height:39.6px;box-sizing:border-box;border:2px solid #1266f1;border-radius:5px"></div>
<div class="t" style="left:2018px;width:134.7px;text-align:center;top:952.29px;font-size:17px;color:#1266f1;-webkit-text-stroke:0.3px #1266f1;letter-spacing:-0.97px">PERŽIŪRĖTI</div>
<div class="a" style="left:1489px;top:1002.91px;width:348px;height:83.93px;background:#ffa07a;border-radius:5px"></div>
<div class="a" style="left:388px;top:1087.04px;width:1946px;height:1px;background:#dee2e6"></div>
<div class="t" style="left:388px;width:134px;text-align:center;top:1031.10px;font-size:20.5px;color:#212529;letter-spacing:-0.35px">8</div>
<div class="t" style="left:522px;width:282px;text-align:center;top:1031.10px;font-size:20.5px;color:#1266f1;letter-spacing:-0.35px">127</div>
<div class="t" style="left:804px;width:342px;text-align:center;top:1031.10px;font-size:20.5px;color:#212529;letter-spacing:-0.27px">2024-06-02 10:06</div>
<div class="t" style="left:1146px;width:342px;text-align:center;top:1031.10px;font-size:20.5px;color:#212529;letter-spacing:-0.27px">2024-06-02 10:22</div>
<div class="t" style="left:1582.10px;top:1031.13px;font-size:20px;color:#8b0000;letter-spacing:0.2px">Dalinai Atrinkta</div>
<svg style="position:absolute;left:1723.6px;top:1031.2599999999998px" width="20.5" height="20.5" viewBox="0 0 16 16" fill="#8b0000"><path d="M8 15A7 7 0 1 0 8 1zm0 1A8 8 0 1 1 8 0a8 8 0 0 1 0 16"/></svg>
<div class="a" style="left:2018px;top:1025.56px;width:134.7px;height:39.6px;box-sizing:border-box;border:2px solid #1266f1;border-radius:5px"></div>
<div class="t" style="left:2018px;width:134.7px;text-align:center;top:1037.47px;font-size:17px;color:#1266f1;-webkit-text-stroke:0.3px #1266f1;letter-spacing:-0.97px">PERŽIŪRĖTI</div>
<div class="a" style="left:1489px;top:1088.04px;width:348px;height:83.93px;background:#00fa9a;border-radius:5px"></div>
<div class="a" style="left:388px;top:1172.17px;width:1946px;height:1px;background:#dee2e6"></div>
<div class="t" style="left:388px;width:134px;text-align:center;top:1116.28px;font-size:20.5px;color:#212529;letter-spacing:-0.35px">9</div>
<div class="t" style="left:522px;width:282px;text-align:center;top:1116.28px;font-size:20.5px;color:#1266f1;letter-spacing:-0.35px">126</div>
<div class="t" style="left:804px;width:342px;text-align:center;top:1116.28px;font-size:20.5px;color:#212529;letter-spacing:-0.27px">2024-05-01 19:26</div>
<div class="t" style="left:1146px;width:342px;text-align:center;top:1116.28px;font-size:20.5px;color:#212529;letter-spacing:-0.27px">2024-05-02 17:16</div>
<div class="t" style="left:1615.70px;top:1116.31px;font-size:20px;color:#006400;letter-spacing:0.1px">Atrinkta</div>
<svg style="position:absolute;left:1690.8px;top:1116.44px" width="20.5" height="20.5" viewBox="0 0 16 16" fill="#006400"><path d="M8 15A7 7 0 1 1 8 1a7 7 0 0 1 0 14m0 1A8 8 0 1 0 8 0a8 8 0 0 0 0 16"/><path d="M10.97 4.97a.235.235 0 0 0-.02.022L7.477 9.417 5.384 7.323a.75.75 0 0 0-1.06 1.06L6.97 11.03a.75.75 0 0 0 1.079-.02l3.992-4.99a.75.75 0 0 0-1.071-1.05"/></svg>
<div class="a" style="left:2018px;top:1110.74px;width:134.7px;height:39.6px;box-sizing:border-box;border:2px solid #1266f1;border-radius:5px"></div>
<div class="t" style="left:2018px;width:134.7px;text-align:center;top:1122.65px;font-size:17px;color:#1266f1;-webkit-text-stroke:0.3px #1266f1;letter-spacing:-0.97px">PERŽIŪRĖTI</div>
<div class="a" style="left:1489px;top:1173.17px;width:348px;height:83.93px;background:#00fa9a;border-radius:5px"></div>
<div class="a" style="left:388px;top:1257.30px;width:1946px;height:1px;background:#dee2e6"></div>
<div class="t" style="left:388px;width:134px;text-align:center;top:1201.46px;font-size:20.5px;color:#212529;letter-spacing:-0.35px">10</div>
<div class="t" style="left:522px;width:282px;text-align:center;top:1201.46px;font-size:20.5px;color:#1266f1;letter-spacing:-0.35px">125</div>
<div class="t" style="left:804px;width:342px;text-align:center;top:1201.46px;font-size:20.5px;color:#212529;letter-spacing:-0.27px">2024-05-01 19:26</div>
<div class="t" style="left:1146px;width:342px;text-align:center;top:1201.46px;font-size:20.5px;color:#212529;letter-spacing:-0.27px">2024-05-25 17:13</div>
<div class="t" style="left:1615.70px;top:1201.49px;font-size:20px;color:#006400;letter-spacing:0.1px">Atrinkta</div>
<svg style="position:absolute;left:1690.8px;top:1201.6200000000001px" width="20.5" height="20.5" viewBox="0 0 16 16" fill="#006400"><path d="M8 15A7 7 0 1 1 8 1a7 7 0 0 1 0 14m0 1A8 8 0 1 0 8 0a8 8 0 0 0 0 16"/><path d="M10.97 4.97a.235.235 0 0 0-.02.022L7.477 9.417 5.384 7.323a.75.75 0 0 0-1.06 1.06L6.97 11.03a.75.75 0 0 0 1.079-.02l3.992-4.99a.75.75 0 0 0-1.071-1.05"/></svg>
<div class="a" style="left:2018px;top:1195.92px;width:134.7px;height:39.6px;box-sizing:border-box;border:2px solid #1266f1;border-radius:5px"></div>
<div class="t" style="left:2018px;width:134.7px;text-align:center;top:1207.83px;font-size:17px;color:#1266f1;-webkit-text-stroke:0.3px #1266f1;letter-spacing:-0.97px">PERŽIŪRĖTI</div>
<div class="a" style="left:1489px;top:1258.30px;width:348px;height:83.93px;background:#00fa9a;border-radius:5px"></div>
<div class="a" style="left:388px;top:1342.43px;width:1946px;height:1px;background:#dee2e6"></div>
<div class="t" style="left:388px;width:134px;text-align:center;top:1286.64px;font-size:20.5px;color:#212529;letter-spacing:-0.35px">11</div>
<div class="t" style="left:522px;width:282px;text-align:center;top:1286.64px;font-size:20.5px;color:#1266f1;letter-spacing:-0.35px">122</div>
<div class="t" style="left:804px;width:342px;text-align:center;top:1286.64px;font-size:20.5px;color:#212529;letter-spacing:-0.27px">2024-05-01 17:32</div>
<div class="t" style="left:1146px;width:342px;text-align:center;top:1286.64px;font-size:20.5px;color:#212529;letter-spacing:-0.27px">2024-05-01 19:04</div>
<div class="t" style="left:1615.70px;top:1286.67px;font-size:20px;color:#006400;letter-spacing:0.1px">Atrinkta</div>
<svg style="position:absolute;left:1690.8px;top:1286.8px" width="20.5" height="20.5" viewBox="0 0 16 16" fill="#006400"><path d="M8 15A7 7 0 1 1 8 1a7 7 0 0 1 0 14m0 1A8 8 0 1 0 8 0a8 8 0 0 0 0 16"/><path d="M10.97 4.97a.235.235 0 0 0-.02.022L7.477 9.417 5.384 7.323a.75.75 0 0 0-1.06 1.06L6.97 11.03a.75.75 0 0 0 1.079-.02l3.992-4.99a.75.75 0 0 0-1.071-1.05"/></svg>
<div class="a" style="left:2018px;top:1281.10px;width:134.7px;height:39.6px;box-sizing:border-box;border:2px solid #1266f1;border-radius:5px"></div>
<div class="t" style="left:2018px;width:134.7px;text-align:center;top:1293.01px;font-size:17px;color:#1266f1;-webkit-text-stroke:0.3px #1266f1;letter-spacing:-0.97px">PERŽIŪRĖTI</div>
<div class="a" style="left:1489px;top:1343.43px;width:348px;height:83.93px;background:#00fa9a;border-radius:5px"></div>
<div class="a" style="left:388px;top:1427.56px;width:1946px;height:1px;background:#dee2e6"></div>
<div class="t" style="left:388px;width:134px;text-align:center;top:1371.82px;font-size:20.5px;color:#212529;letter-spacing:-0.35px">12</div>
<div class="t" style="left:522px;width:282px;text-align:center;top:1371.82px;font-size:20.5px;color:#1266f1;letter-spacing:-0.35px">121</div>
<div class="t" style="left:804px;width:342px;text-align:center;top:1371.82px;font-size:20.5px;color:#212529;letter-spacing:-0.27px">2024-05-01 17:32</div>
<div class="t" style="left:1146px;width:342px;text-align:center;top:1371.82px;font-size:20.5px;color:#212529;letter-spacing:-0.27px">2024-05-25 16:10</div>
<div class="t" style="left:1615.70px;top:1371.85px;font-size:20px;color:#006400;letter-spacing:0.1px">Atrinkta</div>
<svg style="position:absolute;left:1690.8px;top:1371.9799999999998px" width="20.5" height="20.5" viewBox="0 0 16 16" fill="#006400"><path d="M8 15A7 7 0 1 1 8 1a7 7 0 0 1 0 14m0 1A8 8 0 1 0 8 0a8 8 0 0 0 0 16"/><path d="M10.97 4.97a.235.235 0 0 0-.02.022L7.477 9.417 5.384 7.323a.75.75 0 0 0-1.06 1.06L6.97 11.03a.75.75 0 0 0 1.079-.02l3.992-4.99a.75.75 0 0 0-1.071-1.05"/></svg>
<div class="a" style="left:2018px;top:1366.28px;width:134.7px;height:39.6px;box-sizing:border-box;border:2px solid #1266f1;border-radius:5px"></div>
<div class="t" style="left:2018px;width:134.7px;text-align:center;top:1378.19px;font-size:17px;color:#1266f1;-webkit-text-stroke:0.3px #1266f1;letter-spacing:-0.97px">PERŽIŪRĖTI</div>
<div class="a" style="left:1489px;top:1428.56px;width:348px;height:83.93px;background:#6495ed;border-radius:5px"></div>
<div class="a" style="left:388px;top:1512.69px;width:1946px;height:1px;background:#dee2e6"></div>
<div class="t" style="left:388px;width:134px;text-align:center;top:1457.00px;font-size:20.5px;color:#212529;letter-spacing:-0.35px">13</div>
<div class="t" style="left:522px;width:282px;text-align:center;top:1457.00px;font-size:20.5px;color:#1266f1;letter-spacing:-0.35px">120</div>
<div class="t" style="left:804px;width:342px;text-align:center;top:1457.00px;font-size:20.5px;color:#212529;letter-spacing:-0.27px">2024-05-01 17:32</div>
<div class="t" style="left:1146px;width:342px;text-align:center;top:1457.00px;font-size:20.5px;color:#212529;letter-spacing:-0.12px">Neužbaigta</div>
<div class="t" style="left:1606.30px;top:1457.03px;font-size:20px;color:#fff;letter-spacing:0.13px">Laukiama</div>
<svg style="position:absolute;left:1699.2px;top:1457.1599999999999px" width="20.5" height="20.5" viewBox="0 0 16 16" fill="#fff"><path d="M8 3.5a.5.5 0 0 0-1 0V9a.5.5 0 0 0 .252.434l3.5 2a.5.5 0 0 0 .496-.868L8 8.71z"/><path d="M16 8A8 8 0 1 1 0 8a8 8 0 0 1 16 0M1 8a7 7 0 1 0 14 0A7 7 0 0 0 1 8"/></svg>
<div class="a" style="left:1957px;top:1451.46px;width:134.7px;height:39.6px;box-sizing:border-box;border:2px solid #1266f1;border-radius:5px"></div>
<div class="a" style="left:2097px;top:1451.46px;width:116.7px;height:39.6px;box-sizing:border-box;border:2px solid #1266f1;border-radius:5px"></div>
<div class="t" style="left:1957px;width:134.7px;text-align:center;top:1463.37px;font-size:17px;color:#1266f1;-webkit-text-stroke:0.3px #1266f1;letter-spacing:-0.97px">PERŽIŪRĖTI</div>
<div class="t" style="left:2097px;width:116.7px;text-align:center;top:1463.37px;font-size:17px;color:#1266f1;-webkit-text-stroke:0.3px #1266f1;letter-spacing:-0.39px">ATRINKTI</div>
<div class="a" style="left:1489px;top:1513.69px;width:348px;height:83.93px;background:#6495ed;border-radius:5px"></div>
<div class="a" style="left:388px;top:1597.82px;width:1946px;height:1px;background:#dee2e6"></div>
<div class="t" style="left:388px;width:134px;text-align:center;top:1542.18px;font-size:20.5px;color:#212529;letter-spacing:-0.35px">14</div>
<div class="t" style="left:522px;width:282px;text-align:center;top:1542.18px;font-size:20.5px;color:#1266f1;letter-spacing:-0.35px">119</div>
<div class="t" style="left:804px;width:342px;text-align:center;top:1542.18px;font-size:20.5px;color:#212529;letter-spacing:-0.27px">2024-05-01 17:32</div>
<div class="t" style="left:1146px;width:342px;text-align:center;top:1542.18px;font-size:20.5px;color:#212529;letter-spacing:-0.12px">Neužbaigta</div>
<div class="t" style="left:1606.30px;top:1542.21px;font-size:20px;color:#fff;letter-spacing:0.13px">Laukiama</div>
<svg style="position:absolute;left:1699.2px;top:1542.3400000000001px" width="20.5" height="20.5" viewBox="0 0 16 16" fill="#fff"><path d="M8 3.5a.5.5 0 0 0-1 0V9a.5.5 0 0 0 .252.434l3.5 2a.5.5 0 0 0 .496-.868L8 8.71z"/><path d="M16 8A8 8 0 1 1 0 8a8 8 0 0 1 16 0M1 8a7 7 0 1 0 14 0A7 7 0 0 0 1 8"/></svg>
<div class="a" style="left:1957px;top:1536.64px;width:134.7px;height:39.6px;box-sizing:border-box;border:2px solid #1266f1;border-radius:5px"></div>
<div class="a" style="left:2097px;top:1536.64px;width:116.7px;height:39.6px;box-sizing:border-box;border:2px solid #1266f1;border-radius:5px"></div>
<div class="t" style="left:1957px;width:134.7px;text-align:center;top:1548.55px;font-size:17px;color:#1266f1;-webkit-text-stroke:0.3px #1266f1;letter-spacing:-0.97px">PERŽIŪRĖTI</div>
<div class="t" style="left:2097px;width:116.7px;text-align:center;top:1548.55px;font-size:17px;color:#1266f1;-webkit-text-stroke:0.3px #1266f1;letter-spacing:-0.39px">ATRINKTI</div>
<div class="a" style="left:1489px;top:1598.82px;width:348px;height:83.93px;background:#6495ed;border-radius:5px"></div>
<div class="a" style="left:388px;top:1682.95px;width:1946px;height:1px;background:#dee2e6"></div>
<div class="t" style="left:388px;width:134px;text-align:center;top:1627.36px;font-size:20.5px;color:#212529;letter-spacing:-0.35px">15</div>
<div class="t" style="left:522px;width:282px;text-align:center;top:1627.36px;font-size:20.5px;color:#1266f1;letter-spacing:-0.35px">118</div>
<div class="t" style="left:804px;width:342px;text-align:center;top:1627.36px;font-size:20.5px;color:#212529;letter-spacing:-0.27px">2024-05-01 17:32</div>
<div class="t" style="left:1146px;width:342px;text-align:center;top:1627.36px;font-size:20.5px;color:#212529;letter-spacing:-0.12px">Neužbaigta</div>
<div class="t" style="left:1606.30px;top:1627.39px;font-size:20px;color:#fff;letter-spacing:0.13px">Laukiama</div>
<svg style="position:absolute;left:1699.2px;top:1627.52px" width="20.5" height="20.5" viewBox="0 0 16 16" fill="#fff"><path d="M8 3.5a.5.5 0 0 0-1 0V9a.5.5 0 0 0 .252.434l3.5 2a.5.5 0 0 0 .496-.868L8 8.71z"/><path d="M16 8A8 8 0 1 1 0 8a8 8 0 0 1 16 0M1 8a7 7 0 1 0 14 0A7 7 0 0 0 1 8"/></svg>
<div class="a" style="left:1957px;top:1621.82px;width:134.7px;height:39.6px;box-sizing:border-box;border:2px solid #1266f1;border-radius:5px"></div>
<div class="a" style="left:2097px;top:1621.82px;width:116.7px;height:39.6px;box-sizing:border-box;border:2px solid #1266f1;border-radius:5px"></div>
<div class="t" style="left:1957px;width:134.7px;text-align:center;top:1633.73px;font-size:17px;color:#1266f1;-webkit-text-stroke:0.3px #1266f1;letter-spacing:-0.97px">PERŽIŪRĖTI</div>
<div class="t" style="left:2097px;width:116.7px;text-align:center;top:1633.73px;font-size:17px;color:#1266f1;-webkit-text-stroke:0.3px #1266f1;letter-spacing:-0.39px">ATRINKTI</div>
<div class="a" style="left:1489px;top:1683.95px;width:348px;height:83.93px;background:#6495ed;border-radius:5px"></div>
<div class="a" style="left:388px;top:1768.08px;width:1946px;height:1px;background:#dee2e6"></div>
<div class="t" style="left:388px;width:134px;text-align:center;top:1712.54px;font-size:20.5px;color:#212529;letter-spacing:-0.35px">16</div>
<div class="t" style="left:522px;width:282px;text-align:center;top:1712.54px;font-size:20.5px;color:#1266f1;letter-spacing:-0.35px">117</div>
<div class="t" style="left:804px;width:342px;text-align:center;top:1712.54px;font-size:20.5px;color:#212529;letter-spacing:-0.27px">2024-05-01 17:32</div>
<div class="t" style="left:1146px;width:342px;text-align:center;top:1712.54px;font-size:20.5px;color:#212529;letter-spacing:-0.12px">Neužbaigta</div>
<div class="t" style="left:1606.30px;top:1712.57px;font-size:20px;color:#fff;letter-spacing:0.13px">Laukiama</div>
<svg style="position:absolute;left:1699.2px;top:1712.6999999999998px" width="20.5" height="20.5" viewBox="0 0 16 16" fill="#fff"><path d="M8 3.5a.5.5 0 0 0-1 0V9a.5.5 0 0 0 .252.434l3.5 2a.5.5 0 0 0 .496-.868L8 8.71z"/><path d="M16 8A8 8 0 1 1 0 8a8 8 0 0 1 16 0M1 8a7 7 0 1 0 14 0A7 7 0 0 0 1 8"/></svg>
<div class="a" style="left:1957px;top:1707.00px;width:134.7px;height:39.6px;box-sizing:border-box;border:2px solid #1266f1;border-radius:5px"></div>
<div class="a" style="left:2097px;top:1707.00px;width:116.7px;height:39.6px;box-sizing:border-box;border:2px solid #1266f1;border-radius:5px"></div>
<div class="t" style="left:1957px;width:134.7px;text-align:center;top:1718.91px;font-size:17px;color:#1266f1;-webkit-text-stroke:0.3px #1266f1;letter-spacing:-0.97px">PERŽIŪRĖTI</div>
<div class="t" style="left:2097px;width:116.7px;text-align:center;top:1718.91px;font-size:17px;color:#1266f1;-webkit-text-stroke:0.3px #1266f1;letter-spacing:-0.39px">ATRINKTI</div>
<div class="a" style="left:1489px;top:1769.08px;width:348px;height:83.93px;background:#6495ed;border-radius:5px"></div>
<div class="a" style="left:388px;top:1853.21px;width:1946px;height:1px;background:#dee2e6"></div>
<div class="t" style="left:388px;width:134px;text-align:center;top:1797.72px;font-size:20.5px;color:#212529;letter-spacing:-0.35px">17</div>
<div class="t" style="left:522px;width:282px;text-align:center;top:1797.72px;font-size:20.5px;color:#1266f1;letter-spacing:-0.35px">116</div>
<div class="t" style="left:804px;width:342px;text-align:center;top:1797.72px;font-size:20.5px;color:#212529;letter-spacing:-0.27px">2024-05-01 17:32</div>
<div class="t" style="left:1146px;width:342px;text-align:center;top:1797.72px;font-size:20.5px;color:#212529;letter-spacing:-0.12px">Neužbaigta</div>
<div class="t" style="left:1606.30px;top:1797.75px;font-size:20px;color:#fff;letter-spacing:0.13px">Laukiama</div>
<svg style="position:absolute;left:1699.2px;top:1797.8799999999999px" width="20.5" height="20.5" viewBox="0 0 16 16" fill="#fff"><path d="M8 3.5a.5.5 0 0 0-1 0V9a.5.5 0 0 0 .252.434l3.5 2a.5.5 0 0 0 .496-.868L8 8.71z"/><path d="M16 8A8 8 0 1 1 0 8a8 8 0 0 1 16 0M1 8a7 7 0 1 0 14 0A7 7 0 0 0 1 8"/></svg>
<div class="a" style="left:1957px;top:1792.18px;width:134.7px;height:39.6px;box-sizing:border-box;border:2px solid #1266f1;border-radius:5px"></div>
<div class="a" style="left:2097px;top:1792.18px;width:116.7px;height:39.6px;box-sizing:border-box;border:2px solid #1266f1;border-radius:5px"></div>
<div class="t" style="left:1957px;width:134.7px;text-align:center;top:1804.09px;font-size:17px;color:#1266f1;-webkit-text-stroke:0.3px #1266f1;letter-spacing:-0.97px">PERŽIŪRĖTI</div>
<div class="t" style="left:2097px;width:116.7px;text-align:center;top:1804.09px;font-size:17px;color:#1266f1;-webkit-text-stroke:0.3px #1266f1;letter-spacing:-0.39px">ATRINKTI</div>
</body></html>
